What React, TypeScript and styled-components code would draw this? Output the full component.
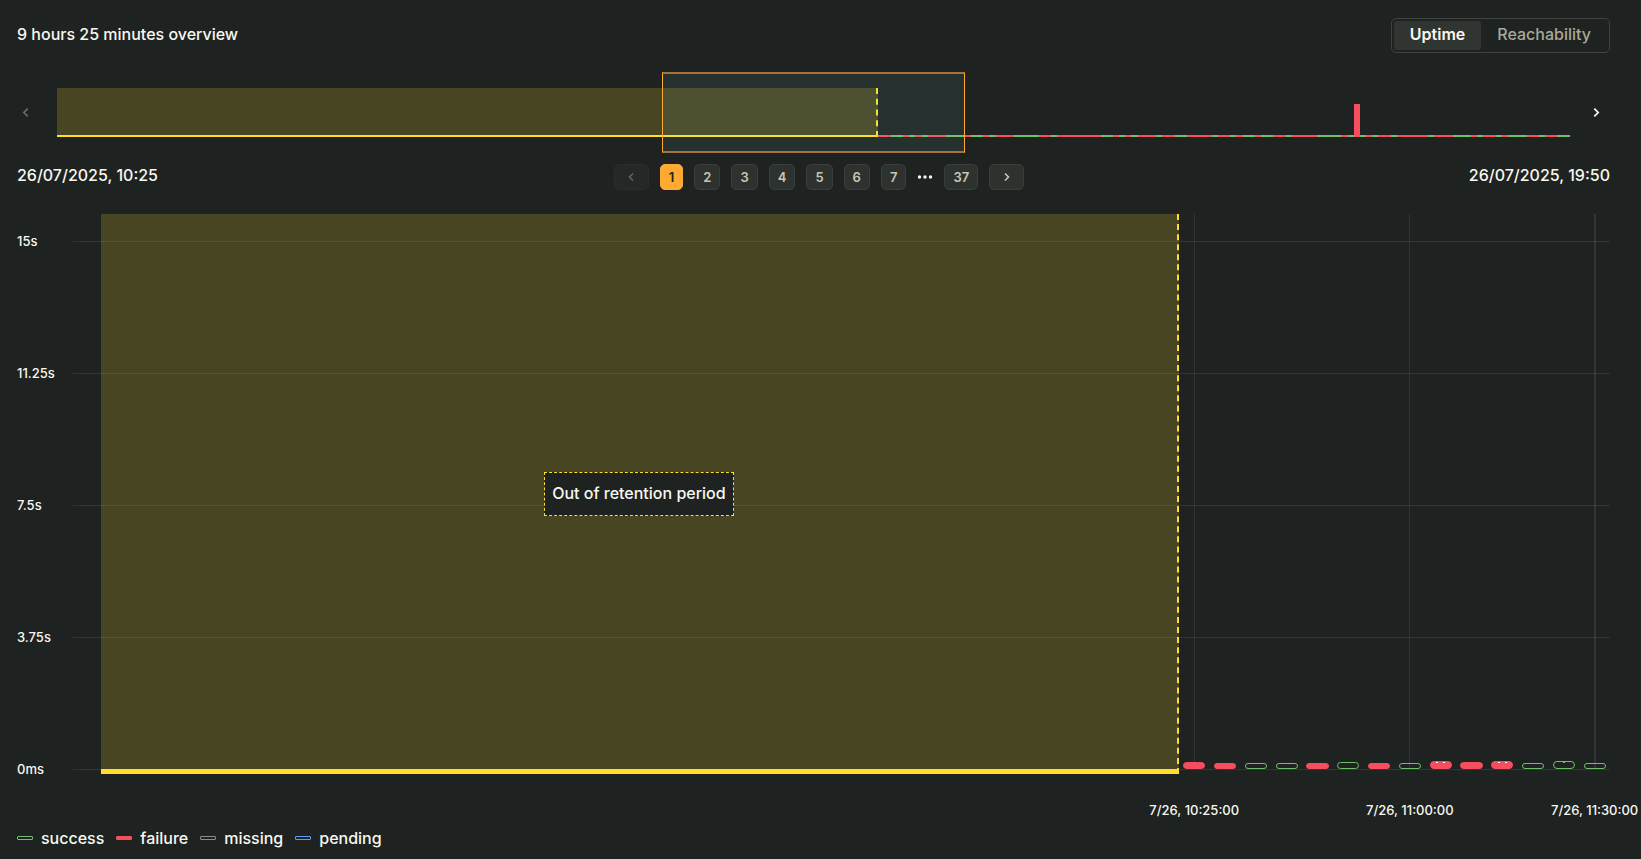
import React, { useState } from "react";
import styled, { createGlobalStyle, css } from "styled-components";

type Status = "success" | "failure" | "missing" | "pending";

const color = {
  bg: "#1e2221",
  text: "#f8f8f0",
  muted: "#a9a996",
  surface: "#313532",
  line: "#3f433f",
  grid: "rgba(255, 255, 255, 0.09)",
  yellow: "#ffdf29",
  yellowFill: "rgba(255, 221, 45, 0.19)",
  orange: "#ffaa33",
};

const statusColor: Record<Status, string> = {
  success: "#6fc069",
  failure: "#f64d5f",
  missing: "#8a8d8b",
  pending: "#5c9dff",
};

/* Run lengths of the checks in the overview, alternating failure and success. */
const overviewRuns = [
  2, 2, 1, 1, 1, 1, 3, 3, 1, 2, 1, 1, 3, 4, 2, 1, 7, 2, 1, 1, 1, 1, 3, 1, 2, 2,
  4, 1, 2, 1, 1, 2, 1, 2, 2, 1, 4, 4, 1, 1, 1, 1, 1, 1, 2, 1, 5, 1, 3, 3, 1, 1,
  2, 1, 1, 3, 2, 1, 2, 2,
];
const peakRun = 40;

/* Share of each chart that lies before the start of the retention period. */
const overviewExpired = "calc(100% * 133 / 245)";
const pageExpired = "calc(100% * 35 / 49)";

interface Check {
  status: Status;
  height: number;
  marks?: number;
  tick?: string;
  wide?: boolean;
}

const checks: Check[] = [
  { status: "failure", height: 7, tick: "7/26, 10:25:00" },
  { status: "failure", height: 6 },
  { status: "success", height: 6 },
  { status: "success", height: 6 },
  { status: "failure", height: 6 },
  { status: "success", height: 7 },
  { status: "failure", height: 6 },
  { status: "success", height: 6, tick: "7/26, 11:00:00" },
  { status: "failure", height: 8, marks: 2 },
  { status: "failure", height: 7 },
  { status: "failure", height: 8, marks: 2 },
  { status: "success", height: 6 },
  { status: "success", height: 8, marks: 1 },
  { status: "success", height: 6, tick: "7/26, 11:30:00", wide: true },
];

const levels = ["15s", "11.25s", "7.5s", "3.75s", "0ms"];
const pages = [1, 2, 3, 4, 5, 6, 7];
const statuses: Status[] = ["success", "failure", "missing", "pending"];

const GlobalStyle = createGlobalStyle`
  *, *::before, *::after { box-sizing: border-box; }
  body {
    margin: 0;
    background: ${color.bg};
    color: ${color.text};
    font: 500 16px/20px Inter, "Liberation Sans", sans-serif;
  }
  button { font: inherit; color: inherit; margin: 0; cursor: pointer; }
`;

const Page = styled.main`
  min-height: 100vh;
  padding: 18px 31px 10px 17px;
  overflow-x: hidden;
`;

const Header = styled.header`
  display: flex;
  justify-content: space-between;
  align-items: flex-start;
`;

const Title = styled.h1`
  margin: 0;
  padding-top: 6px;
  font-size: 16px;
  line-height: 20px;
  font-weight: 500;
`;

const Toggle = styled.div`
  display: flex;
  padding: 2px;
  border: 1px solid ${color.line};
  border-radius: 5px;
`;

const ToggleButton = styled.button<{ $active: boolean }>`
  height: 29px;
  padding: 0 16px 3px;
  border: 0;
  border-radius: 3px;
  line-height: 20px;
  background: ${(p) => (p.$active ? color.surface : "transparent")};
  color: ${(p) => (p.$active ? color.text : color.muted)};
  font-weight: ${(p) => (p.$active ? 600 : 500)};
`;

const Overview = styled.section`
  display: grid;
  grid-template-columns: 40px 1fr 40px;
  height: 81px;
  margin-top: 19px;
`;

const ShiftButton = styled.button<{ $side: "left" | "right" }>`
  display: flex;
  align-items: center;
  justify-content: ${(p) => (p.$side === "left" ? "flex-start" : "flex-end")};
  padding: ${(p) => (p.$side === "left" ? "0 0 0 3px" : "0 8px 0 0")};
  border: 0;
  background: none;

  &:disabled {
    color: #686b68;
    cursor: default;
  }
`;

const Track = styled.div`
  position: relative;
  display: flex;
  align-items: flex-end;
  padding: 16px 0;
`;

const expired = css`
  background: ${color.yellowFill};
  border-right: 2px dashed ${color.yellow};
  border-bottom: 0 solid ${color.yellow};
`;

const TrackExpired = styled.div`
  ${expired}
  flex: 0 0 ${overviewExpired};
  align-self: stretch;
  border-bottom-width: 2px;
`;

const Run = styled.div<{ $slots: number; $status: Status; $peak: boolean }>`
  flex: ${(p) => p.$slots} 1 0;
  height: ${(p) => (p.$peak ? 33 : 2)}px;
  background: ${(p) => statusColor[p.$status]};
`;

const Selection = styled.div`
  position: absolute;
  inset: 0 auto 0 40%;
  width: 20%;
  border: 1px solid ${color.orange};
  border-width: 2px 1px;
  border-color: #a57633 ${color.orange};
  background: rgba(150, 240, 225, 0.075);
`;

const RangeRow = styled.div`
  display: grid;
  grid-template-columns: 1fr auto 1fr;
  align-items: start;
  margin-top: 11px;
`;

const RangeDate = styled.time`
  padding-top: 1px;

  &:last-child {
    text-align: right;
  }
`;

const Pagination = styled.nav`
  display: flex;
  align-items: center;
  gap: 11px;
  padding-left: 11px;
`;

const PageButton = styled.button<{ $current?: boolean }>`
  display: flex;
  align-items: center;
  justify-content: center;
  height: 26px;
  padding: 0 8px;
  border: 1px solid #3a3e3a;
  border-radius: 5px;
  background: #2e322f;
  color: #c6c6b4;
  font-size: 13px;
  line-height: 20px;
  font-weight: 600;

  ${(p) =>
    p.$current &&
    css`
      border-color: ${color.orange};
      background: ${color.orange};
      color: #2a2210;
    `}

  &:disabled {
    opacity: 0.4;
    cursor: default;
  }
`;

const ArrowButton = styled(PageButton)`
  width: 35px;
`;

const Ellipsis = styled.svg`
  width: 16px;
  height: 6px;
  fill: ${color.text};
`;

const Chart = styled.section`
  display: grid;
  margin-top: 24px;
`;

const Levels = styled.div`
  grid-area: 1 / 1;
  display: flex;
  flex-direction: column;
  gap: 111px;
  padding-top: 17px;
`;

const Level = styled.div`
  display: grid;
  grid-template-columns: 56px 1fr;
  align-items: center;
  height: 21px;
  font-size: 13px;
  line-height: 18px;

  &::after {
    content: "";
    height: 1px;
    background: ${color.grid};
  }
`;

const LevelName = styled.span`
  padding-bottom: 2px;
`;

const Series = styled.div`
  grid-area: 1 / 1;
  display: flex;
  height: 560px;
  margin-left: 84px;
`;

const Expired = styled.div`
  ${expired}
  flex: 0 0 ${pageExpired};
  display: flex;
  align-items: center;
  justify-content: center;
  padding-top: 4px;
  border-bottom-width: 5px;
`;

const Notice = styled.div`
  padding: 10px 7px 12px;
  border: 1px dashed ${color.yellow};
  background: ${color.bg};
  white-space: nowrap;
`;

const Slot = styled.div`
  flex: 1 1 0;
  min-width: 0;
  display: grid;
  padding-bottom: 5px;
`;

const TickLine = styled.div<{ $wide?: boolean }>`
  grid-area: 1 / 1;
  justify-self: center;
  width: ${(p) => (p.$wide ? 2 : 1)}px;
  background: ${color.grid};
`;

const pill = css<{ $status: Status }>`
  border: 1px solid ${(p) => statusColor[p.$status]};
  background: ${(p) =>
    p.$status === "failure" ? statusColor.failure : "transparent"};
`;

const Bar = styled.div<{ $status: Status; $height: number }>`
  ${pill}
  grid-area: 1 / 1;
  place-self: end center;
  display: flex;
  justify-content: center;
  gap: 5px;
  width: 72%;
  height: ${(p) => p.$height}px;
  border-radius: 4px;
`;

const Mark = styled.span<{ $status: Status }>`
  width: 2px;
  height: 1px;
  background: ${(p) => (p.$status === "failure" ? "#fff" : statusColor.success)};
`;

const TimeAxis = styled.div`
  display: flex;
  margin: 20px 0 0 84px;
  font-size: 13px;
`;

const AxisSpacer = styled.div`
  flex: 0 0 ${pageExpired};
`;

const AxisSlot = styled.div`
  flex: 1 1 0;
  min-width: 0;
  display: flex;
  justify-content: center;
  white-space: nowrap;
`;

const Legend = styled.ul`
  display: flex;
  gap: 12px;
  margin: 8px 0 0;
  padding: 0;
  list-style: none;
`;

const LegendItem = styled.li`
  display: flex;
  align-items: center;
  gap: 8px;
`;

const Swatch = styled.span<{ $status: Status }>`
  ${pill}
  width: 16px;
  height: 4px;
  border-radius: 1px;
`;

function Chevron({ dir, size = 10 }: { dir: "left" | "right"; size?: number }) {
  return (
    <svg
      width={size}
      height={size}
      viewBox="0 0 10 10"
      fill="none"
      stroke="currentColor"
      strokeWidth="1.6"
      aria-hidden="true"
    >
      <path d={dir === "left" ? "M7 1.5 3.5 5 7 8.5" : "M3 1.5 6.5 5 3 8.5"} />
    </svg>
  );
}

export default function App() {
  const [tab, setTab] = useState("Uptime");
  const [page, setPage] = useState(1);

  return (
    <>
      <GlobalStyle />
      <Page>
        <Header>
          <Title>9 hours 25 minutes overview</Title>
          <Toggle role="group" aria-label="Metric">
            {["Uptime", "Reachability"].map((name) => (
              <ToggleButton
                key={name}
                type="button"
                $active={tab === name}
                aria-pressed={tab === name}
                onClick={() => setTab(name)}
              >
                {name}
              </ToggleButton>
            ))}
          </Toggle>
        </Header>

        <Overview>
          <ShiftButton type="button" $side="left" aria-label="Earlier" disabled>
            <Chevron dir="left" size={11} />
          </ShiftButton>
          <Track>
            <TrackExpired />
            {overviewRuns.map((slots, i) => (
              <Run
                key={i}
                $slots={slots}
                $status={i % 2 ? "success" : "failure"}
                $peak={i === peakRun}
              />
            ))}
            <Selection />
          </Track>
          <ShiftButton type="button" $side="right" aria-label="Later">
            <Chevron dir="right" size={11} />
          </ShiftButton>
        </Overview>

        <RangeRow>
          <RangeDate dateTime="2025-07-26T10:25">26/07/2025, 10:25</RangeDate>
          <Pagination aria-label="Pages">
            <ArrowButton
              type="button"
              aria-label="Previous page"
              disabled={page === 1}
              onClick={() => setPage(page - 1)}
            >
              <Chevron dir="left" />
            </ArrowButton>
            {pages.map((n) => (
              <PageButton
                key={n}
                type="button"
                $current={n === page}
                onClick={() => setPage(n)}
              >
                {n}
              </PageButton>
            ))}
            <Ellipsis viewBox="0 0 16 6" aria-hidden="true">
              <circle cx="2.5" cy="3" r="1.7" />
              <circle cx="8" cy="3" r="1.7" />
              <circle cx="13.5" cy="3" r="1.7" />
            </Ellipsis>
            <PageButton
              type="button"
              $current={page === 37}
              onClick={() => setPage(37)}
            >
              37
            </PageButton>
            <ArrowButton
              type="button"
              aria-label="Next page"
              disabled={page === 37}
              onClick={() => setPage(page + 1)}
            >
              <Chevron dir="right" />
            </ArrowButton>
          </Pagination>
          <RangeDate dateTime="2025-07-26T19:50">26/07/2025, 19:50</RangeDate>
        </RangeRow>

        <Chart>
          <Levels>
            {levels.map((level) => (
              <Level key={level}>
                <LevelName>{level}</LevelName>
              </Level>
            ))}
          </Levels>
          <Series>
            <Expired>
              <Notice>Out of retention period</Notice>
            </Expired>
            {checks.map((check, i) => (
              <Slot key={i}>
                {check.tick && <TickLine $wide={check.wide} />}
                <Bar $status={check.status} $height={check.height}>
                  {Array.from({ length: check.marks ?? 0 }, (_, m) => (
                    <Mark key={m} $status={check.status} />
                  ))}
                </Bar>
              </Slot>
            ))}
          </Series>
        </Chart>

        <TimeAxis>
          <AxisSpacer />
          {checks.map((check, i) => (
            <AxisSlot key={i}>{check.tick}</AxisSlot>
          ))}
        </TimeAxis>

        <Legend>
          {statuses.map((status) => (
            <LegendItem key={status}>
              <Swatch $status={status} />
              {status}
            </LegendItem>
          ))}
        </Legend>
      </Page>
    </>
  );
}
